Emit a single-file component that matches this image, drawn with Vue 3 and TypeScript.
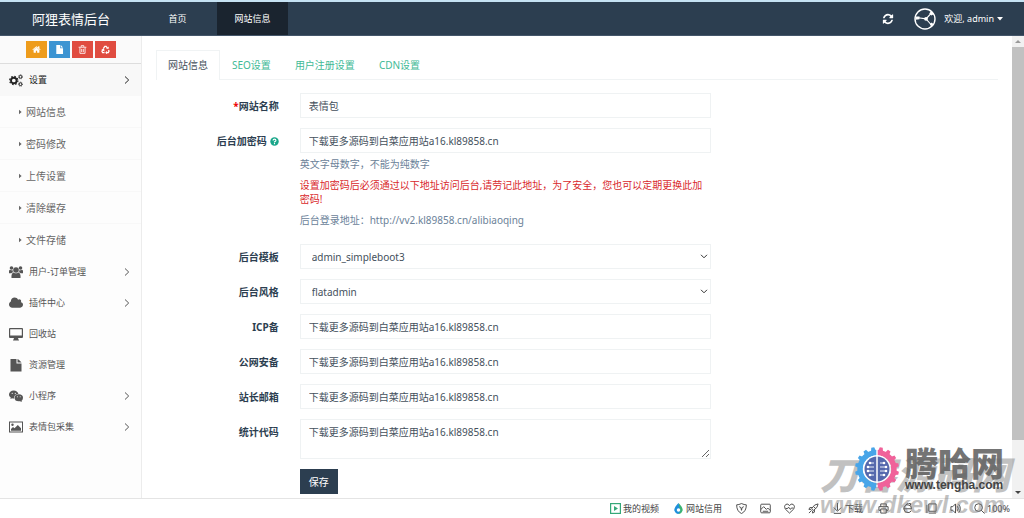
<script setup lang="ts">
import { ref } from 'vue'

interface MenuItem {
  label: string
  icon: string
  expandable: boolean
}

const topLinks = ['首页', '网站信息']
const activeTop = ref('网站信息')

const subItems = ['网站信息', '密码修改', '上传设置', '清除缓存', '文件存储']
const menu: MenuItem[] = [
  { label: '用户-订单管理', icon: 'users', expandable: true },
  { label: '插件中心', icon: 'cloud', expandable: true },
  { label: '回收站', icon: 'desktop', expandable: false },
  { label: '资源管理', icon: 'file', expandable: false },
  { label: '小程序', icon: 'wechat', expandable: true },
  { label: '表情包采集', icon: 'image', expandable: true },
]

const tabs = ['网站信息', 'SEO设置', '用户注册设置', 'CDN设置']
const activeTab = ref('网站信息')

const sample = '下载更多源码到白菜应用站a16.kl89858.cn'
const siteName = ref('表情包')
const adminCode = ref(sample)
const template = ref('admin_simpleboot3')
const theme = ref('flatadmin')
const plain = ref([
  { id: 'icp', label: 'ICP备', value: sample },
  { id: 'police', label: '公网安备', value: sample },
  { id: 'email', label: '站长邮箱', value: sample },
])
const stats = ref(sample)
const teeth = Array.from({ length: 16 }, (_, i) => i * 22.5 + 11.25)
</script>

<template>
  <div class="page">
    <header class="topbar">
      <a class="brand" href="#">阿狸表情后台</a>
      <nav class="topnav">
        <a
          v-for="link in topLinks"
          :key="link"
          href="#"
          :class="{ active: link === activeTop }"
          @click.prevent="activeTop = link"
        >{{ link }}</a>
      </nav>
      <div class="user">
        <button class="refresh" type="button" aria-label="刷新">
          <svg viewBox="0 0 1792 1792"><path d="M1639 1056q0 5-1 7-64 268-268 434.5t-478 166.5q-146 0-282.5-55t-243.5-157l-129 129q-19 19-45 19t-45-19-19-45v-448q0-26 19-45t45-19h448q26 0 45 19t19 45-19 45l-137 137q71 66 161 102t187 36q134 0 250-65t186-179q11-17 53-117 8-23 30-23h192q13 0 22.5 9.5t9.5 22.5zm25-800v448q0 26-19 45t-45 19h-448q-26 0-45-19t-19-45 19-45l138-138q-148-137-349-137-134 0-250 65t-186 179q-11 17-53 117-8 23-30 23h-199q-13 0-22.5-9.5t-9.5-22.5v-7q65-268 270-434.5t480-166.5q146 0 284 55.5t245 156.5l130-129q19-19 45-19t45 19 19 45z" /></svg>
        </button>
        <button class="account" type="button">
          <svg class="avatar" viewBox="0 0 22 22">
            <circle cx="11" cy="11" r="10" fill="none" stroke="#fff" stroke-width="1.4" />
            <path d="M4 9.800l8 1 5-5.300M12 10.800l5 5.700" fill="none" stroke="#fff" stroke-width="1.1" />
            <circle cx="12" cy="10.800" r="1.900" fill="#fff" />
            <path d="M1.500 8.500h4v2.700l-4 .5zM15.200 5.500l2-2.500 2.600 3-2.300 1.600zM15.800 16l2-1.500 1.600 1.800-2.300 2.200z" fill="#fff" />
          </svg>
          <span>欢迎, admin</span>
          <svg class="caret" viewBox="0 0 6 4"><path d="M0 0h6L3 3.500z" /></svg>
        </button>
      </div>
    </header>

    <div class="body">
      <aside class="sidebar">
        <div class="shortcuts">
          <button type="button" class="orange" aria-label="首页">
            <svg viewBox="0 0 1792 1792"><path d="M1472 992v480q0 26-19 45t-45 19h-384v-384h-256v384h-384q-26 0-45-19t-19-45v-480l576-477 575 474q1 2 1 6zm223-69l-62 74q-8 9-21 11h-3q-13 0-21-7l-692-577-692 577q-12 8-24 7-13-2-21-11l-62-74q-8-10-7-23.500t11-21.500l719-599q32-26 76-26t76 26l244 204v-195q0-14 9-23t23-9h192q14 0 23 9t9 23v408l219 182q10 8 11 21.500t-7 23.500z" /></svg>
          </button>
          <button type="button" class="blue" aria-label="文件">
            <svg viewBox="0 0 14 14"><path d="M2 0H8v5h4.500v9H2zM9 0l3.500 4H9z" /></svg>
          </button>
          <button type="button" class="red" aria-label="删除">
            <svg class="line" viewBox="0 0 14 14"><path d="M1 3.500h12M5 3V1h4v2M3 4v9h8V4M5.700 6v5M8.300 6v5" /></svg>
          </button>
          <button type="button" class="red" aria-label="回收">
            <svg viewBox="0 0 14 14"><path d="M3.500 5.500L6 2h2l2 2.800M11.500 8l1 1.500-1.200 2.500H8.500M5.500 12h-3L1.500 9.800 3 7" fill="none" stroke="currentColor" stroke-width="2" /><path d="M8 6h4V2.500zM9.500 9v5.500L6.500 12zM.5 7.500L4.800 6l.7 4z" /></svg>
          </button>
        </div>

        <nav>
          <a class="item open" href="#">
            <svg class="icon gears" viewBox="0 0 14 14">
              <circle cx="4.800" cy="7.500" r="2.800" stroke-width="1.900" />
              <circle cx="4.800" cy="7.500" r="4.100" stroke-width="1.200" stroke-dasharray="1.610 1.610" />
              <circle cx="11.500" cy="3.800" r="1.400" stroke-width="1" />
              <circle cx="11.500" cy="3.800" r="2.100" stroke-width=".7" stroke-dasharray=".825 .825" />
              <circle cx="11.500" cy="11.200" r="1.400" stroke-width="1" />
              <circle cx="11.500" cy="11.200" r="2.100" stroke-width=".7" stroke-dasharray=".825 .825" />
            </svg>
            <span>设置</span>
            <svg class="chev" viewBox="0 0 6 8"><path d="M1 .5L4.700 4 1 7.500" /></svg>
          </a>
          <div class="sub">
            <a v-for="s in subItems" :key="s" href="#">
              <svg viewBox="0 0 4 6"><path d="M0 0l3.500 3L0 6z" /></svg>{{ s }}
            </a>
          </div>
          <a v-for="m in menu" :key="m.label" class="item" href="#">
            <svg v-if="m.icon === 'users'" class="icon" viewBox="0 0 14 14">
              <circle cx="7" cy="5" r="2.800" /><circle cx="2.500" cy="3" r="1.800" /><circle cx="11.500" cy="3" r="1.800" />
              <path d="M2.500 13q-.5-5 2.300-5.500 2.200 1.700 4.400 0Q12 8 11.500 13zM0 8.300V6Q.2 4.800 1.200 4.700q1.300.8 2.300.4Q3.500 7 4.400 7.300 3 7.200 2.500 8.300zM14 8.300V6q-.2-1.200-1.200-1.300-1.300.8-2.300.4 0 1.900-.9 2.200 1.400-.1 1.900 1z" />
            </svg>
            <svg v-else-if="m.icon === 'cloud'" class="icon" viewBox="64 128 1920 1536"><path d="M1984 1152q0 159-112.500 271.500t-271.500 112.500h-1088q-185 0-316.500-131.500t-131.500-316.500q0-132 71-241.500t187-163.500q-2-28-2-43 0-212 150-362t362-150q158 0 286.500 88t187.500 230q70-62 166-62 106 0 181 75t75 181q0 75-41 138 129 30 213 134.500t84 239.500z" /></svg>
            <svg v-else-if="m.icon === 'desktop'" class="icon" viewBox="0 0 14 14"><path fill-rule="evenodd" d="M1 1h12q1 0 1 1v8q0 1-1 1H9l.5 1.500q.5.500.5 1H4q0-.5.5-1L5 11H1q-1 0-1-1V2q0-1 1-1zm.2 1.200v6.300h11.600V2.200z" /></svg>
            <svg v-else-if="m.icon === 'file'" class="icon" viewBox="0 0 14 14"><path d="M1.500 1H7.500v4.500h5V13.500h-11zM8.500 1q1 0 4 3.500h-4z" /></svg>
            <svg v-else-if="m.icon === 'wechat'" class="icon" viewBox="0 0 14 14">
              <path d="M4.800 1.500C2 1.500 0 3.200 0 5.500c0 1.300.7 2.400 1.800 3.100L1.400 10l1.700-.8q1 .3 2.200.2C4.700 6.800 6.700 5 9.400 4.900 8.900 2.900 7 1.500 4.800 1.500z" /><ellipse cx="9.800" cy="8.800" rx="4.200" ry="3.500" /><path d="M10.500 12l2.300 1-.5-2z" />
              <g fill="#fff"><circle cx="3.200" cy="4.300" r=".6" /><circle cx="6.300" cy="4.300" r=".6" /><circle cx="8.400" cy="7.700" r=".5" /><circle cx="11.200" cy="7.700" r=".5" /></g>
            </svg>
            <svg v-else class="icon" viewBox="0 0 14 14"><path fill-rule="evenodd" d="M0 1.500h14v11H0zm1 1v9h12v-9z" /><circle cx="3.500" cy="4.800" r="1.200" /><path d="M2 10.700V9l2-2 1.500 1.200L8.800 5 12 8.200v2.500z" /></svg>
            <span>{{ m.label }}</span>
            <svg v-if="m.expandable" class="chev" viewBox="0 0 6 8"><path d="M1 .5L4.700 4 1 7.500" /></svg>
          </a>
        </nav>
      </aside>

      <main class="content">
        <ul class="tabs">
          <li v-for="t in tabs" :key="t">
            <a href="#" :class="{ active: t === activeTab }" @click.prevent="activeTab = t">{{ t }}</a>
          </li>
        </ul>

        <form class="form" @submit.prevent>
          <div class="row">
            <label for="name"><span class="req">*</span>网站名称</label>
            <div class="field"><input id="name" v-model="siteName" type="text"></div>
          </div>
          <div class="row">
            <label for="code">后台加密码
              <svg class="help" viewBox="0 0 10 10"><circle cx="5" cy="5" r="4.700" fill="#18a689" /><path d="M3.400 3.900Q3.500 2.400 5 2.400T6.600 3.800Q6.600 4.600 5 5.400V6M5 6.800V8" fill="none" stroke="#fff" stroke-width="1.300" /></svg>
            </label>
            <div class="field">
              <input id="code" v-model="adminCode" type="text">
              <p class="hint">英文字母数字，不能为纯数字</p>
              <p class="hint warn">设置加密码后必须通过以下地址访问后台,请劳记此地址，为了安全，您也可以定期更换此加密码!</p>
              <p class="hint">后台登录地址：http://vv2.kl89858.cn/alibiaoqing</p>
            </div>
          </div>
          <div class="row">
            <label for="tpl">后台模板</label>
            <div class="field select">
              <select id="tpl" v-model="template"><option>admin_simpleboot3</option></select>
              <svg viewBox="0 0 8 5"><path d="M1 .8l3 3 3-3" /></svg>
            </div>
          </div>
          <div class="row">
            <label for="theme">后台风格</label>
            <div class="field select">
              <select id="theme" v-model="theme"><option>flatadmin</option></select>
              <svg viewBox="0 0 8 5"><path d="M1 .8l3 3 3-3" /></svg>
            </div>
          </div>
          <div v-for="f in plain" :key="f.id" class="row">
            <label :for="f.id">{{ f.label }}</label>
            <div class="field"><input :id="f.id" v-model="f.value" type="text"></div>
          </div>
          <div class="row">
            <label for="stats">统计代码</label>
            <div class="field"><textarea id="stats" v-model="stats"></textarea></div>
          </div>
          <div class="row">
            <div class="field last"><button class="save" type="submit">保存</button></div>
          </div>
        </form>
      </main>

      <div class="scroll" aria-hidden="true">
        <svg viewBox="0 0 12 11"><path d="M3 7h6L6 4z" /></svg>
        <div class="thumb"></div>
        <svg viewBox="0 0 12 11" class="down"><path d="M3 4h6L6 7z" /></svg>
      </div>
    </div>

    <footer class="status">
      <button type="button" class="video">
        <svg viewBox="0 0 11 11"><rect x=".6" y=".6" width="9.800" height="9.800" fill="none" stroke="#35a878" stroke-width="1.200" /><path d="M4 3l4 2.500L4 8z" fill="#35a878" /></svg>我的视频
      </button>
      <button type="button" class="credit">
        <svg viewBox="0 0 10 12"><path d="M5 0q5 5 4.500 8Q8.500 12 5 12z" fill="#3cb371" /><path d="M5 0Q0 5 .5 8 1.500 12 5 12l2-3z" fill="#1e90dc" /><circle cx="5" cy="7.700" r="1.900" fill="#fff" /></svg>网站信用
      </button>
      <div class="tools left">
        <button type="button" aria-label="防护"><svg viewBox="0 0 12 12"><path d="M6 .6q3 1.400 5.300 1.400 0 7-5.300 9.500Q.7 9 .7 2 3 2 6 .6zM3.500 4q2.500 0 2.500 4 0-4 2.500-4" /></svg></button>
        <button type="button" aria-label="截图"><svg viewBox="0 0 12 12"><rect x=".8" y="1.300" width="10.400" height="9.400" rx="1" /><path d="M1 7l3-3 3 3 1.500-1.500L11 8M3 9h6" /></svg></button>
        <button type="button" aria-label="健康"><svg viewBox="0 0 12 12"><path d="M6 11L1.300 6.500Q-.5 3 2 1.500T6 3q1.500-3 4-1.500t.7 5zM2 6h2l1-1.500L7 7l1-1.500h2" /></svg></button>
        <button type="button" aria-label="加速"><svg viewBox="0 0 12 12"><path d="M11 1Q7 1 4 6l2 2q5-3 5-7zM4.500 5H2L1 7h2.500M7 7.500V10l-2 1V8.500M1 11l3-3M6.500 4.500l1.500 1" /></svg></button>
        <button type="button"><svg viewBox="0 0 12 12"><path d="M6 0v8M2 5l4 4 4-4M2 11.300h8" /></svg><span>下载</span></button>
      </div>
      <div class="tools">
        <button type="button" aria-label="打印"><svg viewBox="0 0 12 12"><path d="M3 4V1h6v3M3 8H1V4h10v4H9M3 6.500h6V11H3z" /></svg></button>
        <button type="button" aria-label="浏览模式"><svg viewBox="0 0 12 12"><path d="M2 6.300h8.500Q10.500 2 6.500 2T2 6.500q.5 4 4.500 4 2.500 0 3.500-2M4 2Q7-1 10 1L8.500 2.300" /></svg></button>
        <button type="button" aria-label="窗口"><svg viewBox="0 0 12 12"><path d="M3 1h8v8H3zM1 2v9M3 11h8" /></svg></button>
        <button type="button" aria-label="声音"><svg viewBox="0 0 12 12"><path d="M1 4h2l3-3v10L3 8H1zM8 3.500q2 2.500 0 5M9.500 1.500q3.500 4.500 0 9" /></svg></button>
        <button type="button"><svg viewBox="0 0 12 12"><circle cx="5" cy="5" r="4.200" /><path d="M8 8l3.500 3.500" /></svg><span>100%</span></button>
      </div>
    </footer>

    <div class="mark under" aria-hidden="true">
      <div class="cjk">刀客源码网</div>
      <div class="url">www.dkewl.com</div>
    </div>
    <div class="mark over" aria-hidden="true">
      <svg viewBox="0 0 46 46">
        <g v-for="a in teeth" :key="a" :transform="`rotate(${a} 23 23)`"><path d="M20.500 5l1-4h3l1 4z" :fill="a < 180 ? '#f0629a' : '#48a5e8'" /></g>
        <path d="M22.300 4A19 19 0 0 0 22.300 42V36.500A13.500 13.500 0 0 1 22.300 9.500z" fill="#48a5e8" />
        <path d="M23.700 4A19 19 0 0 1 23.700 42V36.500A13.500 13.500 0 0 0 23.700 9.500z" fill="#f0629a" />
        <circle cx="23" cy="23" r="13.800" fill="#fff" />
        <circle cx="23" cy="23" r="12.500" fill="#5568ad" />
        <path d="M23 9v28" stroke="#fff" stroke-width="1.500" />
        <path d="M20 17h-4M20 21h-6M20 25h-6M20 29h-4M26 17h4M26 21h6M26 25h6M26 29h4" fill="none" stroke="#e8edf8" stroke-width="1" />
        <g fill="#fff"><circle cx="16" cy="17" r="1.300" /><circle cx="14" cy="21" r="1.300" /><circle cx="14" cy="25" r="1.300" /><circle cx="16" cy="29" r="1.300" /><circle cx="30" cy="17" r="1.300" /><circle cx="32" cy="21" r="1.300" /><circle cx="32" cy="25" r="1.300" /><circle cx="30" cy="29" r="1.300" /></g>
      </svg>
      <div>
        <div class="cjk">腾哈网</div>
        <div class="url">www.tengha.com</div>
      </div>
    </div>
  </div>
</template>

<style>
html, body { background: #fff; }
</style>

<style scoped>
.page, .page * { box-sizing: border-box; }
.page {
  position: relative;
  display: flex;
  flex-direction: column;
  min-height: 100vh;
  overflow: hidden;
  font: 10px/14px "Noto Sans", "Noto Sans CJK SC", sans-serif;
  color: #2c3e50;
}
a { color: inherit; text-decoration: none; }
button { border: 0; padding: 0; background: none; font: inherit; color: inherit; }
svg { display: block; flex: none; fill: currentColor; }

.topbar {
  display: flex;
  height: 36px;
  border-top: 2px solid #c5e2f3;
  border-bottom: 1px solid #44566a;
  background: #2c3e50;
  color: #fff;
}
.brand { width: 142px; text-align: center; font-size: 13px; line-height: 34px; }
.topnav { display: flex; gap: 4px; font-size: 9px; line-height: 34px; }
.topnav a { width: 71px; text-align: center; }
.topnav a.active { background: #1a242f; }
.user { display: flex; align-items: center; margin-left: auto; padding-right: 21px; font-size: 9px; }
.refresh { margin-right: 20px; }
.refresh svg { width: 12px; height: 12px; }
.account { display: flex; align-items: center; }
.avatar { width: 22px; height: 22px; margin-right: 8px; }
.caret { width: 6px; height: 4px; margin-left: 3px; }

.body { display: flex; flex: 1; }
.sidebar { width: 142px; flex: none; border-right: 1px solid #ececec; color: #555; background: #fdfdfd; }
.shortcuts {
  display: flex;
  justify-content: center;
  gap: 2px;
  height: 28px;
  padding-top: 5px;
  border-bottom: 1px solid #ddd;
  background: #fafafa;
}
.shortcuts button { display: grid; place-items: center; width: 21px; height: 17px; color: #fff; }
.shortcuts svg { width: 9px; height: 9px; }
.shortcuts .line { fill: none; stroke: currentColor; stroke-width: 1.3; }
.orange { background: #ee9c1c; }
.blue { background: #3c94d2; }
.red { background: #e04c40; }
.item { display: flex; align-items: center; height: 31px; padding: 0 11px 0 9px; font-size: 9px; }
.item.open { background: #f8f8f8; color: #222; }
.icon { width: 14px; height: 14px; margin-right: 6px; }
.gears { fill: none; stroke: currentColor; }
.chev { width: 6px; height: 8px; margin-left: auto; fill: none; stroke: currentColor; stroke-width: 1; }
.sub { padding-bottom: 1px; }
.sub a {
  display: flex;
  align-items: center;
  gap: 4px;
  height: 32px;
  padding-left: 19px;
  border-top: 1px solid #f8f8f8;
  color: #666;
}
.sub svg { width: 3px; height: 6px; }

.content { flex: 1; min-width: 0; padding: 14px 14px 4px; }
.tabs { display: flex; margin: 0; padding: 0; list-style: none; border-bottom: 1px solid #f0f3f4; }
.tabs a {
  display: block;
  margin-bottom: -1px;
  padding: 7px 11px 8px;
  border: 1px solid transparent;
  border-bottom: 0;
  color: #41ba96;
}
.tabs a.active { border-color: #f0f3f4; background: #fff; color: #454f5a; }
.tabs li { flex: none; }
.form { display: grid; gap: 10px; margin: 13px -10px 0; }
.row { display: grid; grid-template-columns: 2fr 6fr 4fr; align-items: start; }
.row label {
  display: flex;
  justify-content: flex-end;
  align-items: center;
  padding: 6px 11px 0 0;
  font-weight: 700;
}
.req { color: #e00; }
.help { width: 9px; height: 9px; margin-left: 3px; }
.field { padding: 0 10px; }
.last { grid-column: 2; }
input, select, textarea {
  display: block;
  width: 100%;
  height: 25px;
  margin: 0;
  padding: 0 8px;
  border: 1px solid #eff2f3;
  border-radius: 0;
  background: #fff;
  font: inherit;
  color: #44505c;
  outline: 0;
}
select { appearance: none; padding: 0 11px; }
textarea { height: 40px; padding-top: 5px; resize: vertical; }
.select { display: grid; align-items: center; }
.select select, .select svg { grid-area: 1 / 1; }
.select svg { justify-self: end; width: 8px; height: 5px; margin-right: 3px; fill: none; stroke: #333; pointer-events: none; }
.hint { margin: 4px 0 7px; color: #6b8299; }
.hint + .hint { margin-top: 0; }
.hint:last-child { margin-bottom: 7px; }
.hint.warn { color: #d9282b; }
.save { height: 25px; padding: 0 9px; background: #2c3e50; color: #fff; }

.scroll { display: flex; flex-direction: column; width: 12px; background: #f1f1f1; color: #999; }
.scroll svg { width: 12px; height: 11px; }
.scroll .thumb { flex: 0 0 85%; background: #c1c1c1; }
.scroll .down { margin-top: auto; color: #444; }

.status {
  display: flex;
  align-items: center;
  justify-content: flex-end;
  height: 21px;
  padding-right: 14px;
  border-top: 1px solid #e4e4e4;
  border-bottom: 1px solid #333;
  background: #fff;
  font-size: 9px;
  color: #444;
}
.status button { display: flex; align-items: center; gap: 2px; }
.status svg { width: 11px; height: 11px; }
.video { margin-right: 14px; }
.credit { margin-right: 14px; }
.tools { display: flex; gap: 13px; }
.tools.left { margin-right: 15px; }
.tools svg { fill: none; stroke: currentColor; stroke-width: 1; }

.mark { position: absolute; pointer-events: none; white-space: nowrap; }
.mark .cjk { font-family: "Noto Sans CJK SC", sans-serif; font-weight: 900; }
.mark .url { font-family: "Liberation Sans", sans-serif; font-weight: 700; }
.under { right: 14px; bottom: 0; color: #777; opacity: .45; font-style: italic; }
.under .cjk { font-size: 38px; line-height: 36px; }
.under .url { font-size: 24px; line-height: 28px; }
.over { display: flex; align-items: center; gap: 5px; right: 20px; bottom: 27px; color: #666; }
.over svg { width: 46px; height: 46px; }
.over .cjk { font-size: 33px; line-height: 32px; opacity: .9; }
.over .url { font-size: 12px; line-height: 14px; color: #444; }
</style>
